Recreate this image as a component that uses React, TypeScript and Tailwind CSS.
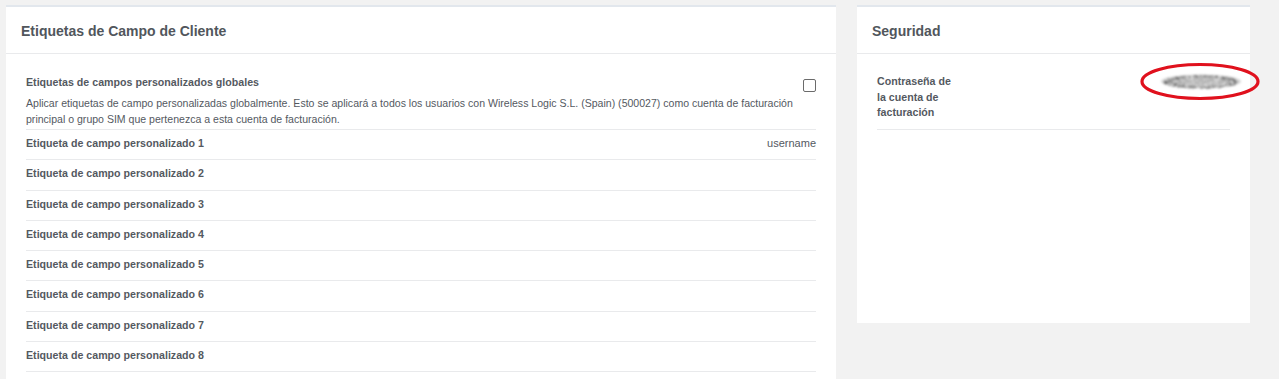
// Ajustes de cuenta: etiquetas de campo y seguridad

const labels = [1, 2, 3, 4, 5, 6, 7, 8].map((n) => ({
  name: `Etiqueta de campo personalizado ${n}`,
  value: n === 1 ? "username" : "",
}));

// puntos pseudo-aleatorios para simular la contraseña difuminada
const dots = Array.from({ length: 520 }, (_, i) => {
  const a = Math.sin(i * 12.9898) * 43758.5453;
  const b = Math.sin(i * 78.233) * 12345.6789;
  const r1 = a - Math.floor(a);
  const r2 = b - Math.floor(b);
  const ang = r1 * Math.PI * 2;
  const rad = Math.sqrt(r2);
  return {
    x: 61 + Math.cos(ang) * rad * 38,
    y: 20.5 + Math.sin(ang) * rad * 6.5,
    shade: r2 > 0.5 ? "#5e5e5e" : "#a8a8a8",
  };
});

function Card({ title, className, children }: { title: string; className?: string; children: React.ReactNode }) {
  return (
    <section className={`bg-white border-t-2 border-[#e2e7ed] ${className ?? ""}`}>
      <div className="h-[47px] flex items-center px-[15px] border-b border-[#e9eaec]">
        <h2 className="text-[14px] font-bold text-[#51565c] pt-[2px]">{title}</h2>
      </div>
      {children}
    </section>
  );
}

function MaskedPassword() {
  return (
    <div className="relative w-[70px] h-[16px] mr-[-10px]">
      <svg
        className="absolute left-[-30px] top-[-13px] overflow-visible"
        width="122"
        height="40"
        viewBox="0 0 122 40"
      >
        <defs>
          <filter id="soft" x="-20%" y="-80%" width="140%" height="260%">
            <feGaussianBlur stdDeviation="0.8" />
          </filter>
        </defs>
        <g filter="url(#soft)">
          <ellipse cx="61" cy="20.5" rx="40" ry="7" fill="#b9b9b9" opacity="0.6" />
          {dots.map((d, i) => (
            <rect key={i} x={d.x} y={d.y} width="1" height="1" fill={d.shade} />
          ))}
        </g>
        <ellipse cx="60" cy="20.5" rx="58" ry="17" fill="none" stroke="#e0111d" strokeWidth="3.2" />
      </svg>
    </div>
  );
}

export default function App() {
  return (
    <div className="h-[379px] overflow-hidden bg-[#f2f2f2] pt-[5px] pl-[6px] font-['Liberation_Sans',Arial,sans-serif] text-[10.55px] text-[#54595f]">
      <div className="flex items-start gap-[21px]">
        <Card title="Etiquetas de Campo de Cliente" className="w-[830px] shrink-0">
          <div className="px-[20px] pt-[20px] pb-[20px]">
            <div className="border-b border-[#e9eaec] pb-[2px]">
              <div className="flex justify-between items-start">
                <div className="font-bold text-[10.65px] leading-[16px] mb-[5px]">
                  Etiquetas de campos personalizados globales
                </div>
                <span className="mt-[5px] w-[13px] h-[13px] rounded-[2px] border border-[#6b6b6b] bg-white" />
              </div>
              <p className="leading-[16px]">
                Aplicar etiquetas de campo personalizadas globalmente. Esto se aplicará a todos los usuarios con
                Wireless Logic S.L. (Spain) (500027) como cuenta de facturación principal o grupo SIM que pertenezca a
                esta cuenta de facturación.
              </p>
            </div>
            {labels.map((l) => (
              <div
                key={l.name}
                className="flex justify-between leading-[16px] pt-[5px] pb-[8.25px] border-b border-[#e9eaec]"
              >
                <span className="font-bold text-[10.65px]">{l.name}</span>
                <span className="text-[11px]">{l.value}</span>
              </div>
            ))}
          </div>
        </Card>

        <Card title="Seguridad" className="w-[393px] h-[318px] shrink-0">
          <div className="px-[20px] pt-[20px]">
            <div className="flex justify-between items-start border-b border-[#e9eaec] pb-[8px]">
              <span className="w-[84px] font-bold text-[10.65px] leading-[15.5px]">
                Contraseña de la cuenta de facturación
              </span>
              <MaskedPassword />
            </div>
          </div>
        </Card>
      </div>
    </div>
  );
}
